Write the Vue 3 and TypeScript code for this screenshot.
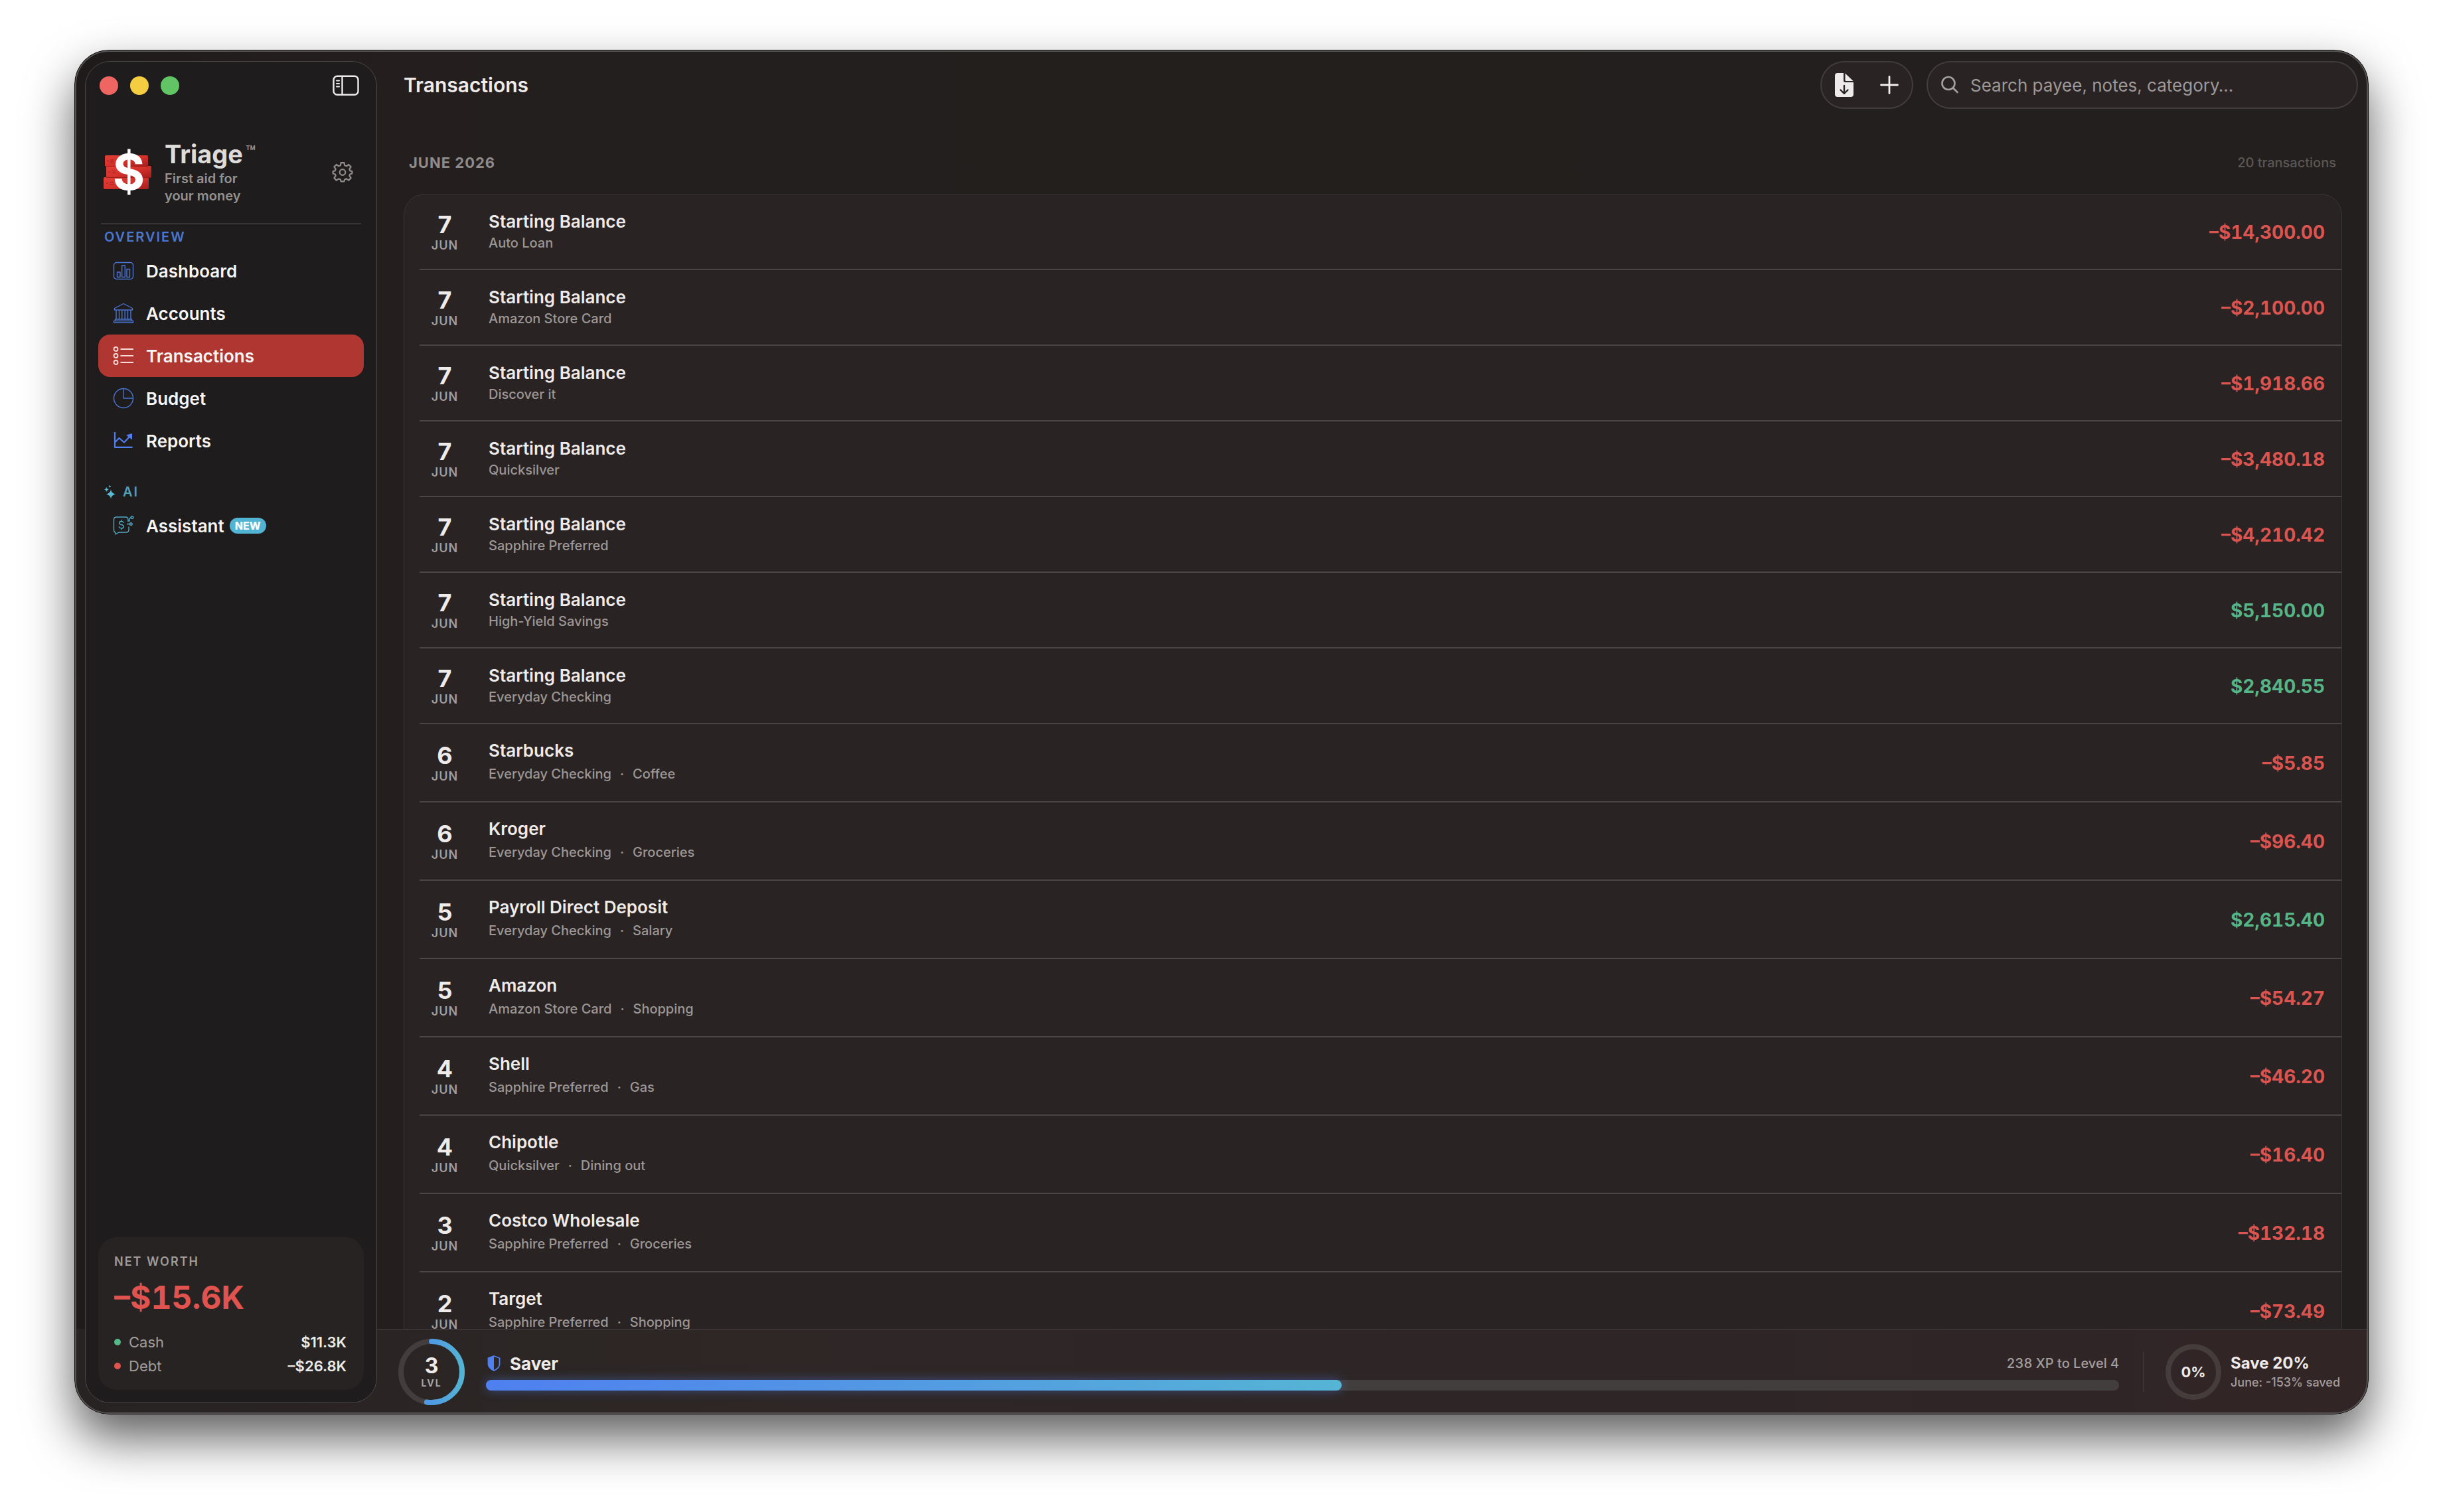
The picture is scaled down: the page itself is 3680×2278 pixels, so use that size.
<script setup lang="ts">
interface Transaction {
  day: number
  payee: string
  account: string
  category?: string
  amount: string
}

interface NavItem {
  id: string
  label: string
  active?: boolean
}

const navItems: NavItem[] = [
  { id: 'dashboard', label: 'Dashboard' },
  { id: 'accounts', label: 'Accounts' },
  { id: 'transactions', label: 'Transactions', active: true },
  { id: 'budget', label: 'Budget' },
  { id: 'reports', label: 'Reports' },
]

const transactions: Transaction[] = [
  { day: 7, payee: 'Starting Balance', account: 'Auto Loan', amount: '–$14,300.00' },
  { day: 7, payee: 'Starting Balance', account: 'Amazon Store Card', amount: '–$2,100.00' },
  { day: 7, payee: 'Starting Balance', account: 'Discover it', amount: '–$1,918.66' },
  { day: 7, payee: 'Starting Balance', account: 'Quicksilver', amount: '–$3,480.18' },
  { day: 7, payee: 'Starting Balance', account: 'Sapphire Preferred', amount: '–$4,210.42' },
  { day: 7, payee: 'Starting Balance', account: 'High-Yield Savings', amount: '$5,150.00' },
  { day: 7, payee: 'Starting Balance', account: 'Everyday Checking', amount: '$2,840.55' },
  { day: 6, payee: 'Starbucks', account: 'Everyday Checking', category: 'Coffee', amount: '–$5.85' },
  { day: 6, payee: 'Kroger', account: 'Everyday Checking', category: 'Groceries', amount: '–$96.40' },
  { day: 5, payee: 'Payroll Direct Deposit', account: 'Everyday Checking', category: 'Salary', amount: '$2,615.40' },
  { day: 5, payee: 'Amazon', account: 'Amazon Store Card', category: 'Shopping', amount: '–$54.27' },
  { day: 4, payee: 'Shell', account: 'Sapphire Preferred', category: 'Gas', amount: '–$46.20' },
  { day: 4, payee: 'Chipotle', account: 'Quicksilver', category: 'Dining out', amount: '–$16.40' },
  { day: 3, payee: 'Costco Wholesale', account: 'Sapphire Preferred', category: 'Groceries', amount: '–$132.18' },
  { day: 2, payee: 'Target', account: 'Sapphire Preferred', category: 'Shopping', amount: '–$73.49' },
]

const levelProgress = 0.524
const ringLength = 2 * Math.PI * 46
</script>

<template>
  <div class="desktop">
    <div class="window">
      <aside class="sidebar">
        <div class="titlebar">
          <button class="light close" aria-label="Close"></button>
          <button class="light minimize" aria-label="Minimize"></button>
          <button class="light expand" aria-label="Zoom"></button>
          <button class="icon-button toggle" aria-label="Toggle sidebar">
            <svg width="40" height="32" viewBox="0 0 40 32" fill="none" stroke="#eceaea" stroke-width="2.4" stroke-linecap="round">
              <rect x="1.5" y="1.8" width="37" height="28" rx="5.5" />
              <path d="M14.5 2v28" />
              <path d="M6 8.5h4M6 13h4M6 17.500h4" stroke-width="2" />
            </svg>
          </button>
        </div>

        <div class="brand">
          <svg class="logo" width="72" height="72" viewBox="0 0 72 72" aria-hidden="true">
            <defs>
              <linearGradient id="bill" x1="0" x2="1" y1="0" y2="1">
                <stop offset="0" stop-color="#e23f37" />
                <stop offset="0.5" stop-color="#d5322c" />
                <stop offset="1" stop-color="#a51d1c" />
              </linearGradient>
            </defs>
            <rect x="0" y="44" width="68" height="18" rx="2" fill="url(#bill)" />
            <rect x="4" y="27" width="68" height="18" rx="2" fill="url(#bill)" />
            <rect x="2" y="11" width="65" height="17" rx="2" fill="url(#bill)" />
            <g stroke="#8f1a18" stroke-width="1" opacity="0.7">
              <path d="M5 19.500h3M10 18h6M10 21h6M7 36h3M12 34.500h6M12 37.500h6M4 53h3M9 51.500h6M9 54.500h6" />
              <path d="M2 27.500h65M4 44.500h68" />
            </g>
            <text x="38" y="63" text-anchor="middle" font-size="74" font-weight="700" fill="#ffffff">$</text>
          </svg>
          <div class="brand-text">
            <h1>Triage<sup>™</sup></h1>
            <p>First aid for<br />your money</p>
          </div>
          <button class="icon-button" aria-label="Settings">
            <svg width="32" height="32" viewBox="0 0 32 32" fill="none" stroke="#8f8c8b" stroke-width="2.2" stroke-linejoin="round">
              <path d="M13.6 2.200h4.800l.8 4 2.600 1.100 3.400-2.300 3.400 3.400-2.300 3.400 1.100 2.600 3 .6v3.400l-3 .8-1.100 2.600 2.300 3.400-3.400 3.400-3.400-2.300-2.600 1.100-.8 3h-4.800l-.8-3-2.600-1.100-3.400 2.300-3.400-3.400 2.300-3.400-1.100-2.600-3-.8v-3.400l3-.6 1.100-2.600-2.300-3.400 3.400-3.400 3.400 2.300 2.600-1.100z" />
              <circle cx="16" cy="16.500" r="4.300" />
            </svg>
          </button>
        </div>

        <nav class="nav" aria-label="Main">
          <h2 class="overview">OVERVIEW</h2>
          <a v-for="item in navItems" :key="item.id" href="#" :class="['nav-item', { active: item.active }]">
            <svg class="nav-icon" width="32" height="32" viewBox="0 0 32 32" fill="none" stroke-width="1.4" stroke-linejoin="round">
              <template v-if="item.id === 'dashboard'">
                <rect x="1.500" y="3.500" width="29" height="25" rx="4" />
                <rect x="6.500" y="18" width="4.500" height="7.500" />
                <rect x="13.700" y="8" width="4.600" height="17.500" />
                <rect x="21" y="13.500" width="4.500" height="12" />
              </template>
              <template v-else-if="item.id === 'accounts'">
                <path d="M16 1.500 29.500 8.500v2.500h-27V8.500z" />
                <path d="M5 11v14M9.500 11v14M13.800 11v14M18.200 11v14M22.500 11v14M27 11v14" />
                <path d="M3.500 25h25v2.500h-25zM1.500 27.500h29v2.500h-29z" />
              </template>
              <template v-else-if="item.id === 'transactions'">
                <circle cx="4.500" cy="6" r="3" stroke-width="1.800" />
                <circle cx="4.500" cy="16" r="3" stroke-width="1.800" />
                <circle cx="4.500" cy="26" r="3" stroke-width="1.800" />
                <path d="M11.500 6h19.500M11.500 16h19.500M11.500 26h19.500" stroke-width="1.800" />
              </template>
              <template v-else-if="item.id === 'budget'">
                <circle cx="16" cy="16" r="14.500" />
                <path d="M16 1.500V16h14.500" />
              </template>
              <template v-else>
                <g stroke="#4f7ef0" stroke-width="2.200">
                  <path d="M3 3v22.800h26.500" />
                  <path d="M3.500 18 9.500 12l7.500 6.500 8.500-9" />
                </g>
                <path d="M29 5v9.500l-9-7z" fill="#4f7ef0" stroke="none" />
              </template>
            </svg>
            <span>{{ item.label }}</span>
          </a>

          <h2 class="ai">
            <svg width="18" height="22" viewBox="0 0 18 22" fill="#5ab8d2" aria-hidden="true">
              <path d="M10 7.500Q10.800 13.200 17 14.500 10.800 15.800 10 21.500 9.200 15.800 3 14.500 9.200 13.200 10 7.500z" />
              <path d="M3.500 3.800Q4 7 7 7.500 4 8 3.500 11.200 3 8 0 7.500 3 7 3.500 3.800z" />
              <path d="M8.500.5Q8.800 2.300 10.600 2.700 8.800 3.100 8.500 4.900 8.200 3.100 6.400 2.700 8.200 2.300 8.500.5z" />
            </svg>
            AI
          </h2>
          <a href="#" class="nav-item assistant">
            <svg class="nav-icon" width="32" height="32" viewBox="0 0 32 32" fill="none" stroke-width="1.400" stroke-linejoin="round" stroke-linecap="round">
              <path d="M23 9V7q0-4-4-4H5.500q-4 0-4 4v15q0 4 2.500 4.300V29l5-3H20q4 0 4-4v-4" />
              <path d="M23 9h2V5.500l2-1.800" />
              <circle cx="29" cy="3.500" r="1.800" />
              <path d="M21.500 13.500h4" />
              <circle cx="27.300" cy="13.500" r="1.800" />
              <path d="M16 11.200q-.8-1.700-3.300-1.700-3 0-3 2.400 0 2 3.200 2.600 3.300.6 3.300 2.900 0 2.500-3.300 2.500-2.700 0-3.700-2M12.800 7.800v1.700M12.800 19.900v1.700" />
            </svg>
            <span>Assistant</span>
            <b class="badge">NEW</b>
          </a>
        </nav>

        <section class="net-worth">
          <h2>NET WORTH</h2>
          <p class="total">–$15.6K</p>
          <dl>
            <div class="cash"><dt>Cash</dt><dd>$11.3K</dd></div>
            <div class="debt"><dt>Debt</dt><dd>–$26.8K</dd></div>
          </dl>
        </section>
      </aside>

      <main class="content">
        <header class="toolbar">
          <h2>Transactions</h2>
          <div class="actions">
            <button class="icon-button" aria-label="Import">
              <svg width="28" height="36" viewBox="0 0 28 36">
                <path d="M4 0h9v11.500q0 2.500 2.500 2.500H28v18q0 4-4 4H4q-4 0-4-4V4q0-4 4-4z" fill="#eceaea" />
                <path d="M15.500.5 27.500 12H17q-1.500 0-1.500-1.500z" fill="#eceaea" />
                <path d="M14 19v11M8.500 25.500 14 31l5.500-5.500" fill="none" stroke="#292323" stroke-width="2.400" stroke-linecap="round" stroke-linejoin="round" />
              </svg>
            </button>
            <button class="icon-button" aria-label="Add transaction">
              <svg width="28" height="28" viewBox="0 0 28 28" stroke="#f2f0f0" stroke-width="2.800" stroke-linecap="round">
                <path d="M14 1.500v25M1.500 14h25" />
              </svg>
            </button>
          </div>
          <label class="search">
            <svg width="26" height="28" viewBox="0 0 26 28" fill="none" stroke="#a5a1a1" stroke-width="2.600" stroke-linecap="round" aria-hidden="true">
              <circle cx="11" cy="11.500" r="9.500" />
              <path d="m18 18.500 6.500 6.500" />
            </svg>
            <input type="search" placeholder="Search payee, notes, category…" aria-label="Search transactions" />
          </label>
        </header>

        <section class="month">
          <header class="month-header">
            <h3>JUNE 2026</h3>
            <span>20 transactions</span>
          </header>
          <ul class="list">
            <li v-for="(t, i) in transactions" :key="i" :class="{ categorized: t.category }">
              <div class="date"><b>{{ t.day }}</b><span>JUN</span></div>
              <div class="details">
                <strong>{{ t.payee }}</strong>
                <p><span>{{ t.account }}</span><template v-if="t.category"><i>·</i><span>{{ t.category }}</span></template></p>
              </div>
              <span :class="['amount', t.amount.startsWith('–') ? 'out' : 'in']">{{ t.amount }}</span>
            </li>
          </ul>
        </section>
      </main>

      <footer class="status">
        <div class="ring level">
          <svg width="100" height="100" viewBox="0 0 100 100" fill="none" stroke-width="8" aria-hidden="true">
            <defs>
              <linearGradient id="level" gradientUnits="userSpaceOnUse" x1="0" y1="45" x2="0" y2="100">
                <stop offset="0" stop-color="#4f98e6" />
                <stop offset="1" stop-color="#54b5d2" />
              </linearGradient>
            </defs>
            <circle cx="50" cy="50" r="46" stroke="#433e3d" />
            <circle cx="50" cy="50" r="46" stroke="url(#level)" stroke-linecap="round" :stroke-dasharray="`${ringLength * levelProgress} ${ringLength}`" transform="rotate(-90 50 50)" />
          </svg>
          <div class="ring-label"><b>3</b><span>LVL</span></div>
        </div>
        <div class="progress">
          <div class="progress-labels">
            <svg width="20" height="24" viewBox="0 0 20 24" aria-hidden="true">
              <path d="M10 1 18.500 4v9q0 6-8.500 10Q1.500 19 1.500 13V4z" fill="none" stroke="#4f7ff0" stroke-width="1.800" stroke-linejoin="round" />
              <path d="M10 1v22Q1.500 19 1.500 13V4z" fill="#4f7ff0" />
            </svg>
            <strong>Saver</strong>
            <span>238 XP to Level 4</span>
          </div>
          <div class="track"><div class="fill" :style="{ width: levelProgress * 100 + '%' }"></div></div>
        </div>
        <div class="goal">
          <div class="ring">
            <svg width="84" height="84" viewBox="0 0 84 84" fill="none" aria-hidden="true">
              <circle cx="42" cy="42" r="38" stroke="#453c3c" stroke-width="8" />
            </svg>
            <div class="ring-label percent">0%</div>
          </div>
          <div class="goal-text">
            <strong>Save 20%</strong>
            <span>June: -153% saved</span>
          </div>
        </div>
      </footer>
    </div>
  </div>
</template>

<style>
body {
  margin: 0;
  background: #ffffff;
}
</style>

<style scoped>
.desktop,
.desktop * {
  box-sizing: border-box;
}
.desktop {
  height: 100vh;
  padding: 75px 112px 147px;
  overflow: hidden;
  font-family: Inter, "Liberation Sans", sans-serif;
  font-size: 26px;
  color: #eeebea;
}
h1, h2, h3, p, ul, dl, dd {
  margin: 0;
  padding: 0;
}
button {
  padding: 0;
  border: 0;
  background: none;
}
svg {
  display: block;
  flex: none;
}
.icon-button {
  display: flex;
  align-items: center;
  justify-content: center;
}

.window {
  position: relative;
  display: grid;
  grid-template-columns: 455px minmax(0, 1fr);
  grid-template-rows: minmax(0, 1fr) 128px;
  height: 100%;
  overflow: hidden;
  border: 1px solid #0c0b0b;
  border-radius: 52px;
  background: linear-gradient(90deg, #1f1b1a, #241f1e 14%, #221f1d 50%, #231f1e);
  box-shadow: 0 36px 72px rgba(0, 0, 0, 0.63);
}
/* Light rim drawn over the whole window edge */
.window::after {
  content: "";
  position: absolute;
  z-index: 2;
  inset: 0;
  border: 2px solid #575453;
  border-radius: 51px;
  pointer-events: none;
}

.sidebar {
  z-index: 1;
  grid-column: 1;
  grid-row: 1 / -1;
  display: flex;
  flex-direction: column;
  margin: 16px 0 16px 15px;
  padding: 0 19px 19px;
  border: 1px solid #4a4746;
  border-radius: 38px;
  background: #1e1c1c;
}
.titlebar {
  display: flex;
  align-items: center;
  gap: 18px;
  height: 72px;
  padding: 0 7px 0 2px;
}
.light {
  width: 28px;
  height: 28px;
  border-radius: 50%;
}
.close { background: #ee6562; }
.minimize { background: #f5cd40; }
.expand { background: #61c566; }
.toggle {
  margin-left: auto;
}
.brand {
  display: flex;
  align-items: center;
  gap: 20px;
  height: 173px;
  margin: 0 4px;
  padding: 16px 12px 0 4px;
  border-bottom: 2px solid #363333;
}
.logo {
  overflow: visible;
}
.brand-text {
  flex: 1;
  padding-top: 2px;
}
.brand h1 {
  margin-bottom: 4px;
  font-size: 38px;
  line-height: 40px;
  font-weight: 700;
  color: #dedcdb;
}
.brand sup {
  margin-left: 4px;
  font-size: 24px;
  line-height: 0;
  font-weight: 600;
  vertical-align: 9px;
  color: #989594;
}
.brand p {
  font-size: 20px;
  line-height: 26px;
  font-weight: 600;
  color: #949190;
}

.nav {
  flex: 1;
}
.nav h2 {
  display: flex;
  align-items: center;
  gap: 10px;
  height: 38px;
  padding-left: 9px;
  font-size: 20px;
  font-weight: 600;
  letter-spacing: 2px;
}
.overview { color: #4b77d2; }
.nav .ai {
  margin-top: 26px;
  color: #529fb8;
}
.nav-item {
  display: flex;
  align-items: center;
  gap: 18px;
  height: 64px;
  padding-left: 22px;
  border-radius: 18px;
  font-weight: 600;
  color: #f7f5f5;
  text-decoration: none;
}
.nav-icon { stroke: #4a74d0; }
.assistant .nav-icon { stroke: #52aac4; }
.active {
  background: #b03731;
}
.active .nav-icon { stroke: #fbd9d6; }
.badge {
  height: 24px;
  margin-left: -10px;
  padding: 0 8px;
  border-radius: 12px;
  background: #52b4d3;
  font-size: 16px;
  line-height: 24px;
  font-weight: 800;
  color: #ffffff;
}

.net-worth {
  height: 230px;
  padding: 25px 26px 0 24px;
  border-radius: 28px;
  background: #272322;
}
.net-worth h2 {
  font-size: 18px;
  line-height: 24px;
  font-weight: 600;
  letter-spacing: 2px;
  color: #a09c9b;
}
.total {
  margin: 12px 0 19px;
  font-size: 48px;
  line-height: 60px;
  font-weight: 700;
  font-variant-numeric: tabular-nums;
  color: #e1534e;
}
.net-worth dl div {
  display: flex;
  align-items: center;
  gap: 12px;
  height: 36px;
  font-size: 22px;
}
.net-worth dl div::before {
  content: "";
  width: 10px;
  height: 10px;
  border-radius: 50%;
  background: #55b887;
}
.net-worth .debt::before {
  background: #e1534e;
}
dt { color: #a29e9d; }
dd {
  margin-left: auto;
  font-weight: 600;
}

.content {
  grid-column: 2;
  grid-row: 1;
  min-height: 0;
  overflow: hidden;
  padding: 16px 15px 0 40px;
}
.toolbar {
  display: flex;
  align-items: center;
  gap: 20px;
  height: 72px;
}
.toolbar h2 {
  flex: 1;
  font-size: 30px;
  font-weight: 600;
}
.actions,
.search {
  display: flex;
  align-items: center;
  height: 72px;
  border: 2px solid #423d3b;
  border-radius: 36px;
  background: #292323;
}
.actions {
  gap: 40px;
  width: 140px;
  padding: 0 20px;
}
.search {
  gap: 18px;
  width: 650px;
  padding: 0 20px;
}
.search input {
  flex: 1;
  min-width: 0;
  padding: 0;
  border: 0;
  outline: 0;
  background: none;
  font: inherit;
  color: inherit;
}
.search input::placeholder {
  color: #9d9999;
  opacity: 1;
}
.month {
  padding-right: 24px;
}
.month-header {
  display: flex;
  align-items: center;
  justify-content: space-between;
  height: 128px;
  padding: 34px 9px 0 8px;
}
.month-header h3 {
  font-size: 22px;
  font-weight: 700;
  letter-spacing: 1px;
  color: #8f8b8a;
}
.month-header span {
  font-size: 20px;
  font-weight: 500;
  color: #5b5756;
}
.list {
  border: 1px solid #3a3534;
  border-radius: 32px;
  background: #292323;
  list-style: none;
}
.list li {
  display: flex;
  align-items: center;
  height: 114px;
  margin-left: 23px;
  padding: 2px 25px 0 0;
  border-bottom: 2px solid #4b4645;
}
.list li.categorized {
  height: 118px;
}
.date {
  display: flex;
  flex-direction: column;
  align-items: center;
  width: 76px;
}
.date b {
  font-size: 36px;
  line-height: 40px;
  font-weight: 700;
}
.date span {
  font-size: 18px;
  line-height: 24px;
  font-weight: 600;
  letter-spacing: 1px;
  color: #a29d9c;
}
.details {
  flex: 1;
  padding-left: 28px;
}
.details strong {
  display: block;
  line-height: 32px;
  font-weight: 600;
}
.details p {
  display: flex;
  gap: 13px;
  font-size: 20px;
  line-height: 32px;
  font-weight: 500;
  color: #9c9796;
}
.categorized .details p {
  line-height: 38px;
}
.details i {
  font-style: normal;
}
.amount {
  font-size: 28px;
  font-weight: 700;
  font-variant-numeric: tabular-nums;
}
.out { color: #dc544f; }
.in { color: #55b587; }

.status {
  grid-column: 1 / -1;
  grid-row: 2;
  display: flex;
  align-items: center;
  padding: 2px 36px 0 487px;
  background:
    linear-gradient(#3a3534, #3a3534) 455px 0 / 100% 2px no-repeat,
    linear-gradient(90deg, #272322, #2e2726 30%, #2e2626 70%, #322526);
}
.ring {
  display: grid;
  place-items: center;
}
.ring > * {
  grid-area: 1 / 1;
}
.ring-label {
  display: flex;
  flex-direction: column;
  align-items: center;
}
.ring-label b {
  font-size: 32px;
  line-height: 34px;
}
.ring-label span {
  font-size: 14px;
  line-height: 18px;
  font-weight: 700;
  letter-spacing: 2px;
  color: #a8a3a2;
}
.ring-label.percent {
  font-size: 22px;
  font-weight: 700;
}
.progress {
  flex: 1;
  margin-left: 32px;
}
.progress-labels {
  display: flex;
  align-items: center;
  gap: 14px;
  height: 30px;
  margin-bottom: 10px;
  padding-left: 2px;
}
.progress-labels strong {
  flex: 1;
  font-weight: 700;
}
.progress-labels span {
  font-size: 20px;
  font-weight: 500;
  font-variant-numeric: tabular-nums;
  color: #a39d9d;
}
.track {
  height: 16px;
  border-radius: 8px;
  background: #433e3e;
}
.fill {
  height: 100%;
  border-radius: 8px;
  background: linear-gradient(90deg, #4f7ff0, #55b5d4);
  box-shadow: 0 0 16px rgba(79, 127, 240, 0.45);
}
.goal {
  display: flex;
  align-items: center;
  gap: 14px;
  margin-left: 36px;
}
.goal::before {
  content: "";
  width: 2px;
  height: 60px;
  margin-right: 18px;
  background: #3d3535;
}
.goal-text {
  min-width: 171px;
}
.goal-text strong,
.goal-text span {
  display: block;
}
.goal-text strong {
  font-size: 24px;
  line-height: 32px;
  font-weight: 700;
}
.goal-text span {
  font-size: 18px;
  line-height: 26px;
  font-weight: 500;
  color: #a39d9d;
}
</style>
